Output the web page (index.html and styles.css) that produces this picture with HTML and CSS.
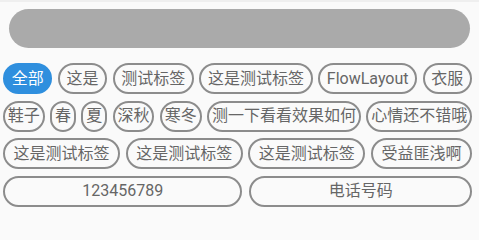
FILE: index.html
```html
<!DOCTYPE html>
<html lang="zh">
<head>
<meta charset="utf-8">
<title>FlowLayout</title>
<link rel="stylesheet" href="styles.css">
</head>
<body>
<div class="topline"></div>
<div class="search"></div>
<div class="tags">
  <div class="row">
    <span class="tag active">全部</span>
    <span class="tag">这是</span>
    <span class="tag">测试标签</span>
    <span class="tag">这是测试标签</span>
    <span class="tag">FlowLayout</span>
    <span class="tag">衣服</span>
  </div>
  <div class="row">
    <span class="tag">鞋子</span>
    <span class="tag">春</span>
    <span class="tag">夏</span>
    <span class="tag">深秋</span>
    <span class="tag">寒冬</span>
    <span class="tag">测一下看看效果如何</span>
    <span class="tag">心情还不错哦</span>
  </div>
  <div class="row">
    <span class="tag">这是测试标签</span>
    <span class="tag">这是测试标签</span>
    <span class="tag">这是测试标签</span>
    <span class="tag">受益匪浅啊</span>
  </div>
  <div class="row wide">
    <span class="tag">123456789</span>
    <span class="tag">电话号码</span>
  </div>
</div>
</body>
</html>
```
FILE: styles.css
```css
html, body {
  margin: 0;
  padding: 0;
}
body {
  background: #fafafa;
  font-family: Roboto, "Noto Sans CJK SC", sans-serif;
  width: 479px;
  height: 225px;
  overflow: hidden;
}
.topline {
  height: 2px;
  background: #efefef;
}
.search {
  margin: 7px 9px 0 9px;
  height: 39px;
  border-radius: 20px;
  background: #aaaaaa;
}
.tags {
  margin-top: 15px;
  padding: 0 7px 0 3px;
  display: flex;
  flex-direction: column;
  gap: 6.5px;
}
.row {
  display: flex;
  gap: 5.5px;
}
.row.wide {
  gap: 7px;
}
.tag {
  flex: 1 1 auto;
  box-sizing: border-box;
  height: 31px;
  border: 2px solid #8c8c8c;
  border-radius: 16px;
  padding: 0 2.5px;
  color: #666666;
  font-size: 16px;
  line-height: 1;
  display: flex;
  align-items: center;
  justify-content: center;
  white-space: nowrap;
}
.tag.active {
  background: #2f8fde;
  border-color: #2f8fde;
  color: #ffffff;
}
```
